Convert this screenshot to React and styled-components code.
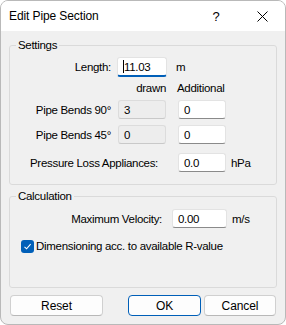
import React from "react";
import styled, { createGlobalStyle } from "styled-components";

const Global = createGlobalStyle`
  html, body { margin: 0; padding: 0; background: #ffffff; }
  body { font-family: "Liberation Sans", Arial, sans-serif; font-size: 11.5px; letter-spacing: -0.3px; color: #000; }
  * { box-sizing: border-box; }
`;

const Window = styled.div`
  width: 286px;
  height: 325px;
  border: 1px solid #b9b9b9;
  border-radius: 8px;
  background: #f0f0f0;
  overflow: hidden;
  display: flex;
  flex-direction: column;
`;

const TitleBar = styled.div`
  height: 30px;
  background: #ffffff;
  display: flex;
  align-items: center;
  padding-left: 8px;
  flex: none;
`;

const Title = styled.div`
  flex: 1;
  font-size: 12px;
  letter-spacing: -0.1px;
`;

const CaptionButton = styled.div`
  width: 46px;
  height: 30px;
  display: flex;
  align-items: center;
  justify-content: center;
  font-size: 13px;
`;

const Body = styled.div`
  flex: 1;
  display: flex;
  flex-direction: column;
  padding: 6px 8px 0 8px;
`;

const Group = styled.fieldset`
  margin: ${(p) => p.$mt || 0}px 0 0 0;
  padding: ${(p) => p.$pt}px 0 ${(p) => p.$pb}px 0;
  border: 1px solid #dadada;
  border-radius: 3px;
  display: flex;
  flex-direction: column;
  min-width: 0;
`;

const Legend = styled.legend`
  margin-left: 6px;
  padding: 0 2px;
  line-height: 16px;
`;

const Row = styled.div`
  display: flex;
  align-items: center;
  height: ${(p) => p.$h || 19}px;
  margin-top: ${(p) => p.$mt || 0}px;
  padding-left: ${(p) => p.$pl || 0}px;
`;

const Label = styled.div`
  width: ${(p) => p.$w}px;
  flex: none;
  text-align: ${(p) => p.$align || "right"};
  padding-left: ${(p) => p.$pl || 0}px;
  margin-right: ${(p) => p.$gap || 0}px;
  white-space: nowrap;
`;

const Field = styled.div`
  width: ${(p) => p.$w || 48}px;
  height: ${(p) => p.$h || 19}px;
  flex: none;
  display: flex;
  align-items: center;
  padding-left: 5px;
  margin-right: ${(p) => p.$gap || 0}px;
  background: ${(p) => (p.$readOnly ? "#ededed" : "#ffffff")};
  border: 1px solid ${(p) => (p.$readOnly ? "#dcdcdc" : "#e3e3e3")};
  border-bottom: ${(p) =>
    p.$focused ? "2px solid #005fb8" : p.$readOnly ? "1px solid #c9c9c9" : "1px solid #8a8a8a"};
  border-radius: 3px;
  white-space: nowrap;
`;

const Caret = styled.span`
  display: inline-block;
  width: 1px;
  height: 13px;
  background: #000;
`;

const Unit = styled.div`
  white-space: nowrap;
`;

const Spacer = styled.div`
  width: ${(p) => p.$w}px;
  flex: none;
`;

const ColHead = styled.div`
  width: ${(p) => p.$w}px;
  flex: none;
  text-align: ${(p) => p.$align || "left"};
  margin-right: ${(p) => p.$gap || 0}px;
  white-space: nowrap;
`;

const Check = styled.div`
  width: 13px;
  height: 13px;
  border-radius: 3px;
  background: #005fb8;
  display: flex;
  align-items: center;
  justify-content: center;
  margin-right: 2px;
  flex: none;
`;

const ButtonRow = styled.div`
  display: flex;
  align-items: center;
  margin-top: 7px;
  padding: 0 1px;
`;

const Button = styled.div`
  width: ${(p) => p.$w}px;
  height: 21px;
  flex: none;
  display: flex;
  align-items: center;
  justify-content: center;
  background: #fdfdfd;
  border: 1px solid ${(p) => (p.$default ? "#005fb8" : "#d0d0d0")};
  border-bottom-color: ${(p) => (p.$default ? "#005fb8" : "#b8b8b8")};
  border-radius: 4px;
  margin-left: ${(p) => p.$ml || 0}px;
  font-size: 12px;
  letter-spacing: -0.1px;
`;

const Fill = styled.div`
  flex: 1;
`;

export default function App() {
  return (
    <>
      <Global />
      <Window>
        <TitleBar>
          <Title>Edit Pipe Section</Title>
          <CaptionButton>?</CaptionButton>
          <CaptionButton>
            <svg width="11" height="11" viewBox="0 0 11 11">
              <path d="M0.5 0.5 L10.5 10.5 M10.5 0.5 L0.5 10.5" stroke="#000" strokeWidth="1" fill="none" />
            </svg>
          </CaptionButton>
        </TitleBar>
        <Body>
          <Group $pt={4} $pb={12}>
            <Legend>Settings</Legend>
            <Row $h={20}>
              <Label $w={101} $gap={6}>Length:</Label>
              <Field $w={50} $h={20} $focused $gap={9}>
                <Caret />11.03
              </Field>
              <Unit>m</Unit>
            </Row>
            <Row $h={16} $mt={3}>
              <Spacer $w={108} />
              <ColHead $w={48} $align="right" $gap={11}>drawn</ColHead>
              <ColHead $w={60}>Additional</ColHead>
            </Row>
            <Row $mt={4}>
              <Label $w={101} $gap={7}>Pipe Bends 90°</Label>
              <Field $readOnly $gap={12}>3</Field>
              <Field>0</Field>
            </Row>
            <Row $mt={6}>
              <Label $w={101} $gap={7}>Pipe Bends 45°</Label>
              <Field $readOnly $gap={12}>0</Field>
              <Field>0</Field>
            </Row>
            <Row $mt={9}>
              <Label $w={168} $align="left" $pl={20}>Pressure Loss Appliances:</Label>
              <Field $gap={5}>0.0</Field>
              <Unit>hPa</Unit>
            </Row>
          </Group>
          <Group $mt={3} $pt={5} $pb={33}>
            <Legend>Calculation</Legend>
            <Row>
              <Label $w={152} $gap={10}>Maximum Velocity:</Label>
              <Field $w={55} $gap={5}>0.00</Field>
              <Unit>m/s</Unit>
            </Row>
            <Row $h={16} $mt={10} $pl={11}>
              <Check>
                <svg width="9" height="9" viewBox="0 0 9 9">
                  <path d="M1.5 4.8 L3.6 6.8 L7.6 2.2" stroke="#fff" strokeWidth="1.1" fill="none" />
                </svg>
              </Check>
              <Unit>Dimensioning acc. to available R-value</Unit>
            </Row>
          </Group>
          <ButtonRow>
            <Button $w={93}>Reset</Button>
            <Fill />
            <Button $w={73} $default>OK</Button>
            <Button $w={72} $ml={3}>Cancel</Button>
          </ButtonRow>
        </Body>
      </Window>
    </>
  );
}
